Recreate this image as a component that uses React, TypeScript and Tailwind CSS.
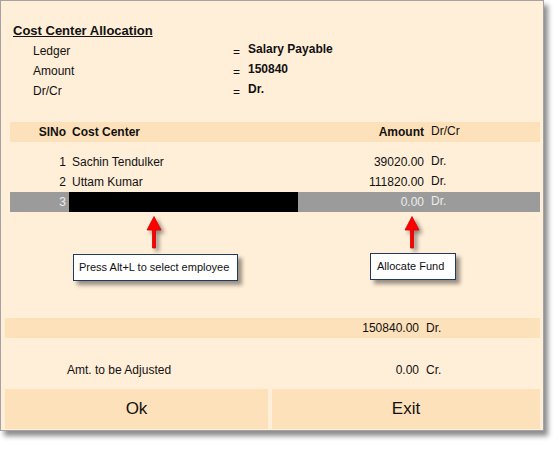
const info = [
  { label: "Ledger", value: "Salary Payable" },
  { label: "Amount", value: "150840" },
  { label: "Dr/Cr", value: "Dr." },
];

const rows = [
  { no: 1, name: "Sachin Tendulker", amount: "39020.00" },
  { no: 2, name: "Uttam Kumar", amount: "111820.00" },
];

function Arrow({ className }: { className: string }) {
  return (
    <svg
      width="16"
      height="34"
      viewBox="0 0 16 34"
      className={`absolute drop-shadow-[3px_3px_2px_rgba(0,0,0,0.45)] ${className}`}
    >
      <path
        d="M8 0.5 L1 14 L6.5 14 L6.5 32 L9.5 32 L9.5 14 L15 14 Z"
        fill="#ff0000"
        stroke="#d40000"
        strokeWidth="0.8"
      />
    </svg>
  );
}

function Callout({ className, text }: { className: string; text: string }) {
  return (
    <div
      className={`absolute flex h-[27px] items-center border-[1.5px] border-[#1f3b64] bg-white text-[11px] shadow-[4px_4px_4px_rgba(0,0,0,0.4)] ${className}`}
    >
      {text}
    </div>
  );
}

export default function App() {
  return (
    <div className="h-[450px] w-[560px] bg-white font-['Liberation_Sans',Arial,sans-serif] text-[12px] text-[#111]">
      <div className="flex h-[431px] w-[544px] flex-col border border-[#a3a3a3] bg-[#ffeed8] shadow-[4px_5px_5px_rgba(0,0,0,0.45)]">
        <h1 className="ml-[12px] mt-[22px] text-[13px] font-bold leading-[16px] underline">
          Cost Center Allocation
        </h1>

        <div className="mt-[2px] flex flex-col">
          {info.map((row) => (
            <div key={row.label} className="flex h-[20px] items-center">
              <span className="ml-[32px] w-[200px]">{row.label}</span>
              <span className="w-[15px] pt-[2px]">=</span>
              <span className="pb-[4px] font-bold">{row.value}</span>
            </div>
          ))}
        </div>

        {/* table header */}
        <div className="ml-[9px] mt-[21px] flex h-[20px] w-[530px] items-center bg-[#fde1ba]">
          <span className="w-[59px] pr-[3px] text-right font-bold">SlNo</span>
          <span className="w-[229px] pl-[3px] font-bold">Cost Center</span>
          <span className="flex-1 text-right font-bold">Amount</span>
          <span className="w-[116px] pb-[3px] pl-[7px]">Dr/Cr</span>
        </div>

        <div className="ml-[9px] mt-[10px] flex w-[530px] flex-col">
          {rows.map((r) => (
            <div key={r.no} className="flex h-[20px] items-center">
              <span className="w-[59px] pr-[3px] text-right">{r.no}</span>
              <span className="w-[229px] pl-[3px]">{r.name}</span>
              <span className="flex-1 text-right">{r.amount}</span>
              <span className="w-[116px] pb-[3px] pl-[7px]">Dr.</span>
            </div>
          ))}
          <div className="flex h-[20px] items-center bg-[#9b9b9b] text-[#ececec]">
            <span className="w-[59px] pr-[3px] text-right">3</span>
            <span className="h-full w-[229px] bg-black" />
            <span className="flex-1 text-right">0.00</span>
            <span className="w-[116px] pb-[3px] pl-[7px]">Dr.</span>
          </div>
        </div>

        {/* hints */}
        <div className="relative h-[106px]">
          <Arrow className="left-[145px] top-[4px]" />
          <Arrow className="left-[403px] top-[4px]" />
          <Callout className="left-[72px] top-[42px] w-[165px] pl-[5px]" text="Press Alt+L to select employee" />
          <Callout className="left-[369px] top-[41px] w-[86px] pl-[6px]" text="Allocate Fund" />
        </div>

        <div className="ml-[4px] flex h-[20px] w-[535px] items-center bg-[#fde1ba]">
          <span className="w-[414px] text-right">150840.00</span>
          <span className="pl-[7px]">Dr.</span>
        </div>

        <div className="ml-[4px] mt-[22px] flex h-[20px] w-[535px] items-center">
          <div className="flex w-[414px] justify-between">
            <span className="pl-[62px]">Amt. to be Adjusted</span>
            <span>0.00</span>
          </div>
          <span className="pl-[7px]">Cr.</span>
        </div>

        <div className="ml-[4px] mt-[9px] flex h-[40px] gap-[4px] text-[17px]">
          <button className="w-[263px] bg-[#fde1ba]">Ok</button>
          <button className="w-[268px] bg-[#fde1ba]">Exit</button>
        </div>
      </div>
    </div>
  );
}
